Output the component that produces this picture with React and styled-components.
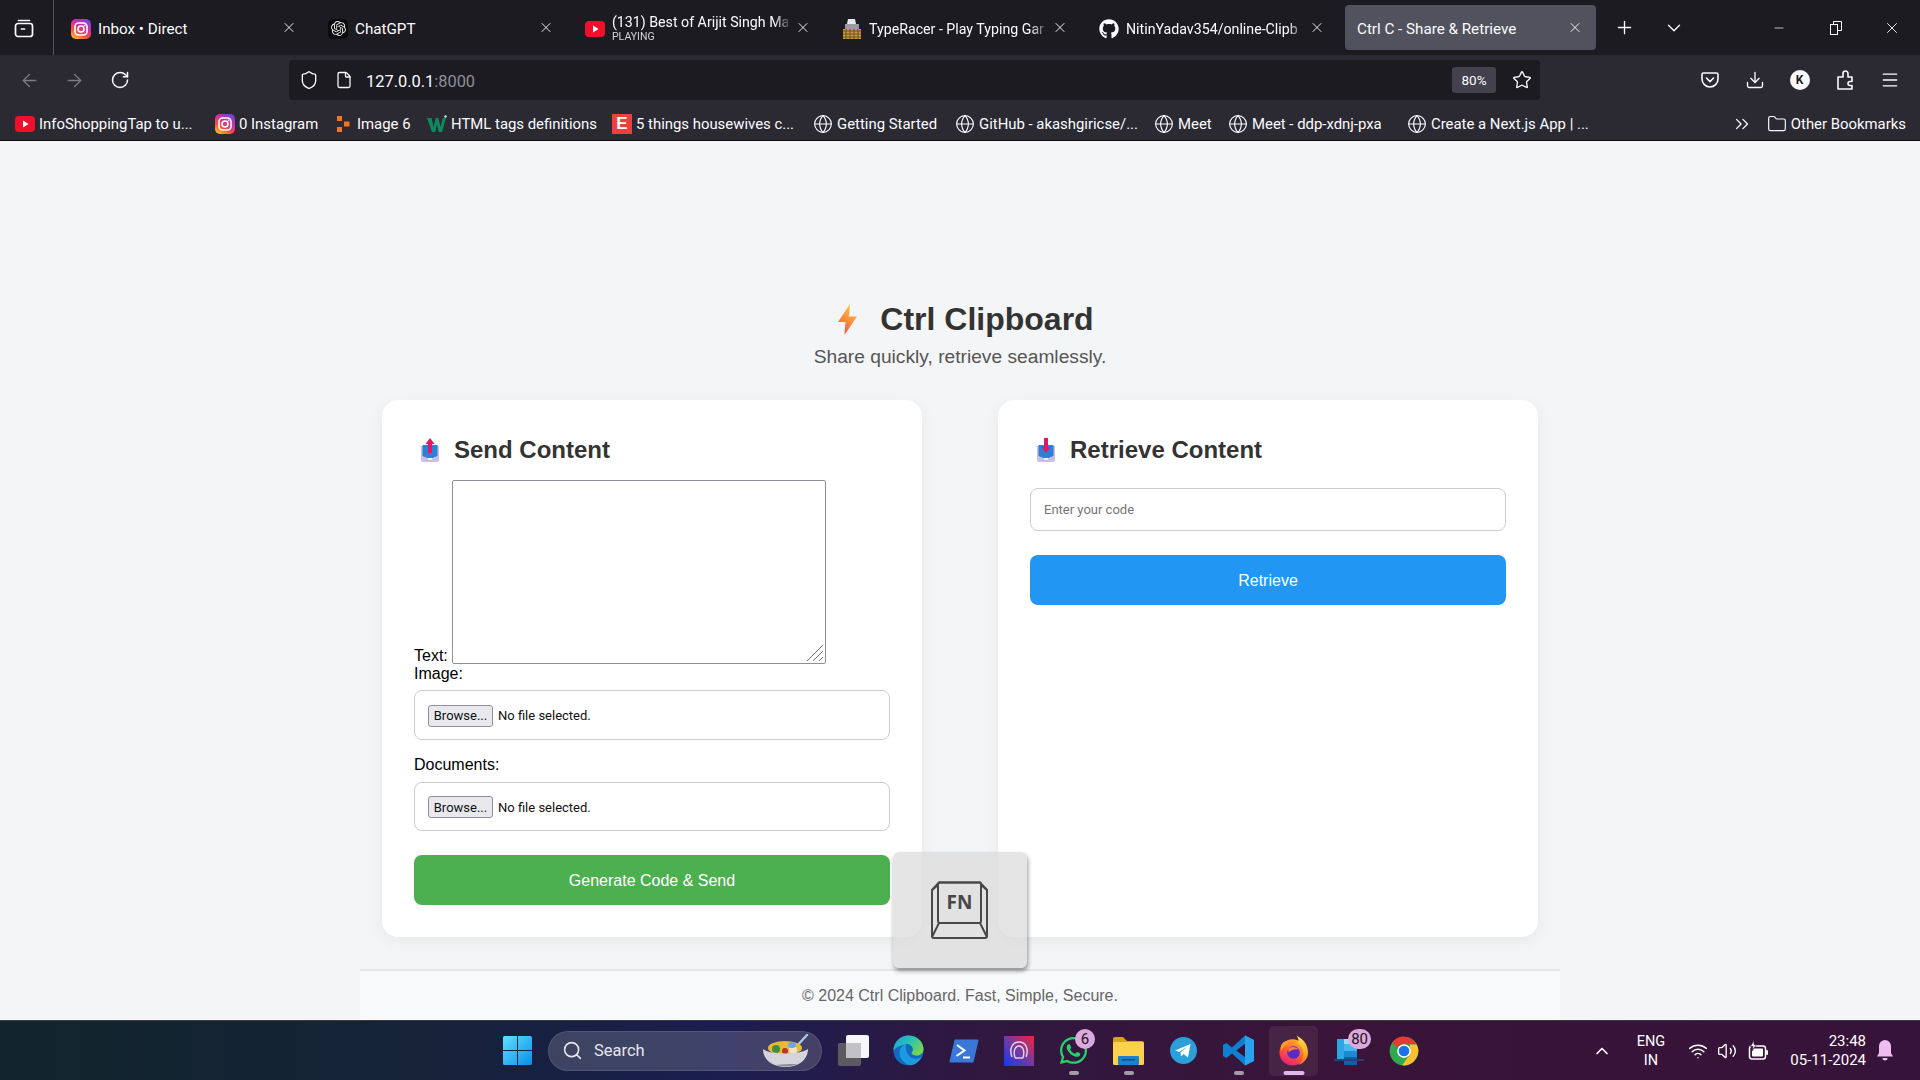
import React from 'react'
import styled, { createGlobalStyle } from 'styled-components'
import {
  ArrowLeft, ArrowRight, RotateCw, Plus, ChevronDown, Minus, X, Shield, File, Star,
  Download, Menu, Globe, ChevronsRight, Folder, Search, ChevronUp, Wifi, Volume2,
} from 'lucide-react'
import { SiOpenai } from 'react-icons/si'
import { FaGithub, FaWhatsapp } from 'react-icons/fa'

const GlobalStyle = createGlobalStyle`
  html, body { margin: 0; padding: 0; height: 100%; overflow: hidden; }
  body { background: #f4f5f7; font-family: "Liberation Sans", Arial, sans-serif; }
  * { box-sizing: border-box; }
`

const Screen = styled.div`
  width: 1920px;
  height: 1080px;
  display: flex;
  flex-direction: column;
  overflow: hidden;
`

/* browser chrome */
const TabStrip = styled.div`
  height: 55px;
  flex: none;
  display: flex;
  align-items: stretch;
  background: #1c1b22;
  color: #fbfbfe;
  font-family: Roboto, sans-serif;
  font-size: 15.2px;
`
const TabsButton = styled.div`
  width: 54px;
  margin-right: 4px;
  padding-right: 5px;
  display: flex;
  align-items: center;
  justify-content: center;
  border-right: 1px solid #55545c;
`
const Tab = styled.div`
  width: ${({ $active }) => ($active ? '251px' : '257px')};
  margin: ${({ $active }) => ($active ? '5px 0 5px 2px' : '0')};
  padding: 2px 0 0 ${({ $active }) => ($active ? '12px' : '13px')};
  display: flex;
  align-items: center;
  gap: 7px;
  border-radius: 4px;
  background: ${({ $active }) => ($active ? '#52525e' : 'transparent')};
`
const TabTitle = styled.div`
  flex: 1;
  min-width: 0;
  white-space: nowrap;
  overflow: hidden;
  font-size: ${({ $fade }) => ($fade ? '14.2px' : 'inherit')};
  mask-image: ${({ $fade }) => ($fade ? 'linear-gradient(to right, #000 92%, rgba(0, 0, 0, 0.25))' : 'none')};
`
const TabSub = styled.div`
  margin-top: 1px;
  font-size: 10.5px;
  line-height: 12px;
  color: #d4d4d8;
`
const TabClose = styled.div`
  width: 16px;
  flex: none;
  margin-right: ${({ $active }) => ($active ? '13px' : '18px')};
  margin-bottom: 2px;
  display: flex;
  justify-content: center;
`
const StripButton = styled.div`
  width: ${({ $w }) => $w}px;
  display: flex;
  align-items: center;
  justify-content: center;
`
const WindowButtons = styled.div`
  margin-left: auto;
  display: flex;
`
const Toolbar = styled.div`
  height: 50px;
  flex: none;
  padding-left: 7px;
  display: flex;
  align-items: center;
  background: #2b2a33;
  color: #fbfbfe;
`
const NavButton = styled.div`
  width: 45px;
  display: flex;
  justify-content: center;
  color: ${({ $dim }) => ($dim ? '#7c7b82' : '#fbfbfe')};
`
const UrlBar = styled.div`
  width: 1251px;
  height: 40px;
  margin-left: 147px;
  margin-right: 147px;
  padding: 0 4px 0 10px;
  display: flex;
  align-items: center;
  border-radius: 4px;
  background: #1c1b22;
`
const UrlIcon = styled.div`
  width: ${({ $w }) => $w}px;
  margin-right: ${({ $mr }) => $mr}px;
  display: flex;
  justify-content: center;
`
const UrlText = styled.div`
  margin-left: -1px;
  padding-top: 2px;
  font-family: Roboto, sans-serif;
  font-size: 16.4px;
  color: #fbfbfe;
  span { color: #8f8f96; }
`
const ZoomChip = styled.div`
  width: 44px;
  height: 26px;
  margin-left: auto;
  margin-right: 12px;
  display: flex;
  align-items: center;
  justify-content: center;
  border-radius: 3px;
  background: #42414d;
  font-family: Roboto, sans-serif;
  font-size: 13.5px;
`
const Avatar = styled.div`
  width: 20px;
  height: 20px;
  display: flex;
  align-items: center;
  justify-content: center;
  border-radius: 50%;
  background: #fbfbfe;
  color: #1c1b22;
  font: bold 12px Roboto, sans-serif;
`
const BookmarkBar = styled.div`
  height: 36px;
  flex: none;
  padding: 2px 14px 0 15px;
  display: flex;
  align-items: center;
  background: #2b2a33;
  border-bottom: 1px solid #0c0c0d;
  color: #fbfbfe;
  font-family: Roboto, sans-serif;
  font-size: 14.9px;
`
const Bookmark = styled.div`
  width: ${({ $w }) => ($w ? `${$w}px` : 'auto')};
  flex: none;
  display: flex;
  align-items: center;
  gap: 4px;
  white-space: nowrap;
`
const BookmarkIcon = styled.div`
  width: 20px;
  height: 20px;
  flex: none;
  display: flex;
  align-items: center;
  justify-content: center;
`
const BookmarkEnd = styled.div`
  margin-left: auto;
  display: flex;
  align-items: center;
  gap: 14px;
`

/* page */
const Page = styled.main`
  flex: 1;
  min-height: 0;
  position: relative;
  background: #f4f5f7;
`
const Column = styled.div`
  width: 1200px;
  height: 100%;
  margin: 0 auto;
  display: flex;
  flex-direction: column;
`
const Hero = styled.header`
  padding: 160px 0 32px;
  text-align: center;
`
const Title = styled.h1`
  margin: 0;
  padding-left: 12px;
  display: flex;
  align-items: center;
  justify-content: center;
  gap: 23px;
  font-size: 32px;
  line-height: 36px;
  font-weight: bold;
  color: #333;
`
const Tagline = styled.p`
  margin: 9px 0 0;
  font-size: 19.2px;
  line-height: 22px;
  color: #555;
`
const Cards = styled.div`
  padding: 0 22px;
  display: flex;
  justify-content: space-between;
`
const Card = styled.section`
  width: 540px;
  height: 537px;
  padding: 36px 32px 32px;
  border-radius: 16px;
  background: #fff;
  box-shadow: 0 4px 16px rgba(0, 0, 0, 0.06);
`
const CardHeading = styled.h2`
  margin: 0 0 ${({ $gap }) => $gap}px;
  padding-left: 6px;
  display: flex;
  align-items: center;
  gap: 14px;
  font-size: 24px;
  line-height: 27px;
  color: #333;
`
const TextRow = styled.div`
  display: flex;
  align-items: flex-end;
  gap: 4px;
`
const FieldLabel = styled.label`
  display: block;
  margin-top: ${({ $top }) => $top || 0}px;
  margin-bottom: ${({ $bottom }) => $bottom || 0}px;
  font-size: 16px;
  line-height: 18px;
  color: #000;
`
const TextAreaWrap = styled.div`
  position: relative;
  width: 374px;
  height: 184px;
`
const TextBox = styled.textarea`
  display: block;
  width: 100%;
  height: 100%;
  border: 1.5px solid #8f8f9d;
  border-radius: 2px;
  background: #fff;
  resize: none;
  outline: none;
`
const ResizeHandle = styled.svg`
  position: absolute;
  right: 2px;
  bottom: 2px;
`
const FileBox = styled.div`
  height: ${({ $h }) => $h}px;
  margin-bottom: 16px;
  padding: 1px 0 0 13px;
  display: flex;
  align-items: center;
  gap: 5px;
  border: 1px solid #ccc;
  border-radius: 8px;
  font-family: Roboto, sans-serif;
  font-size: 13px;
  color: #111;
`
const BrowseButton = styled.button`
  width: 65px;
  height: 22px;
  padding: 0;
  border: 1px solid #8f8f9d;
  border-radius: 3px;
  background: #e9e9ed;
  font: 13px Roboto, sans-serif;
  color: #111;
`
const ActionButton = styled.button`
  display: block;
  width: 100%;
  height: 50px;
  margin-top: ${({ $top }) => $top}px;
  padding: 2px 0 0;
  border: 0;
  border-radius: 8px;
  background: ${({ $color }) => $color};
  color: #fff;
  font: 16px "Liberation Sans", Arial, sans-serif;
`
const CodeInput = styled.input`
  display: block;
  width: 100%;
  height: 43px;
  padding: 0 13px;
  border: 1px solid #ccc;
  border-radius: 8px;
  background: #fff;
  outline: none;
  font: 13px Roboto, sans-serif;
  &::placeholder { color: #757575; opacity: 1; }
`
const Footer = styled.footer`
  flex: 1;
  margin-top: 32px;
  padding-top: 14px;
  border-top: 2px solid #e3e4e6;
  background: #f8f9fb;
  text-align: center;
  font-size: 16px;
  line-height: 22px;
  color: #666;
`
const FnOverlay = styled.div`
  position: absolute;
  left: 893px;
  top: 711px;
  width: 134px;
  height: 116px;
  padding-right: 2px;
  display: flex;
  align-items: center;
  justify-content: center;
  border-radius: 6px;
  background: rgba(218, 218, 218, 0.7);
  box-shadow: 1px 3px 4px rgba(0, 0, 0, 0.4);
`

/* windows taskbar */
const Taskbar = styled.div`
  height: 60px;
  flex: none;
  padding-left: 490px;
  display: flex;
  align-items: center;
  border-top: 1px solid #3b3a40;
  background: linear-gradient(90deg, #12252c 0%, #152238 22%, #1b1e50 38%, #2f1840 50%, #3a1439 68%, #36133a 100%);
  color: #fff;
  font-family: Roboto, sans-serif;
`
const TaskSlot = styled.div`
  position: relative;
  width: 55px;
  height: 50px;
  flex: none;
  display: flex;
  align-items: center;
  justify-content: center;
  &::before {
    content: '';
    position: absolute;
    inset: 0 3px;
    border-radius: 5px;
    background: ${({ $active }) => ($active ? 'rgba(255, 255, 255, 0.07)' : 'transparent')};
  }
  > svg { position: relative; }
`
const RunDot = styled.div`
  position: absolute;
  left: 50%;
  bottom: 1px;
  width: ${({ $active }) => ($active ? '21px' : '10px')};
  height: 4px;
  transform: translateX(-50%);
  border-radius: 2px;
  background: ${({ $active }) => ($active ? '#e4b5e8' : '#a39ca6')};
`
const Badge = styled.div`
  position: absolute;
  top: 3px;
  right: ${({ $wide }) => ($wide ? '5px' : '6px')};
  min-width: 20px;
  height: 20px;
  padding: 0 3px;
  display: flex;
  align-items: center;
  justify-content: center;
  border-radius: 10px;
  background: #dba9de;
  color: #1d1020;
  font-size: 15px;
`
const SearchBox = styled.div`
  width: 274px;
  height: 40px;
  margin: 0 4px 0 3px;
  padding: 0 11px 0 13px;
  flex: none;
  display: flex;
  align-items: center;
  gap: 11px;
  border-radius: 20px;
  border: 1px solid rgba(255, 255, 255, 0.1);
  background: rgba(255, 255, 255, 0.16);
  color: #e6e6ea;
  font-size: 16.5px;
  svg:last-child { margin-left: auto; }
`
const Tray = styled.div`
  margin-left: auto;
  padding-right: 24px;
  display: flex;
  align-items: center;
`
const TraySlot = styled.div`
  width: ${({ $w }) => $w}px;
  display: flex;
  justify-content: center;
`
const LangText = styled.div`
  text-align: center;
  font-size: 14.5px;
  line-height: 19px;
`
const Clock = styled.div`
  width: 91px;
  margin-right: 8px;
  text-align: right;
  font-size: 15px;
  line-height: 19px;
`

/* drawn icons */
const InstagramIcon = ({ id }) => (
  <svg width="20" height="20" viewBox="0 0 20 20">
    <defs>
      <linearGradient id={id} x1="0.1" y1="1" x2="0.7" y2="0">
        <stop offset="0" stopColor="#fdc830" />
        <stop offset="0.35" stopColor="#f5533d" />
        <stop offset="0.65" stopColor="#d62f9b" />
        <stop offset="1" stopColor="#7b3fe4" />
      </linearGradient>
    </defs>
    <rect width="20" height="20" rx="5" fill={`url(#${id})`} />
    <rect x="4" y="4" width="12" height="12" rx="3.5" fill="none" stroke="#fff" strokeWidth="1.6" />
    <circle cx="10" cy="10" r="3" fill="none" stroke="#fff" strokeWidth="1.6" />
    <circle cx="13.6" cy="6.4" r="0.9" fill="#fff" />
  </svg>
)
const YoutubeIcon = () => (
  <svg width="20" height="16" viewBox="0 0 20 16">
    <rect width="20" height="16" rx="4" fill="#f0102c" />
    <path d="M8 4.5 L13.5 8 L8 11.5 Z" fill="#fff" />
  </svg>
)
const FaviconBlack = styled.div`
  width: 20px;
  height: 20px;
  flex: none;
  display: flex;
  align-items: center;
  justify-content: center;
  border-radius: 5px;
  background: #0b0b0d;
`
const ChatGptIcon = () => (
  <FaviconBlack><SiOpenai size={15} color="#e8e8e8" /></FaviconBlack>
)
const TypeRacerIcon = () => (
  <svg width="20" height="20" viewBox="0 0 20 20">
    <path d="M6 0h7l1 5H5z" fill="#e8e8ea" />
    <rect x="3" y="5" width="14" height="5" fill="#9a9aa0" />
    <rect x="1" y="10" width="18" height="10" fill="#c79a3c" />
    <path d="M1 12h18M1 15h18M1 18h18M4 10v10M8 10v10M12 10v10M16 10v10" stroke="#6e5220" strokeWidth="1" />
  </svg>
)
const ImageSixIcon = () => (
  <svg width="14" height="20" viewBox="0 0 14 20">
    <path d="M1 2h5v5H1zM8 7.5h5.5v5H8zM1 13h5v5H1z" fill="#f47521" />
  </svg>
)
const WIcon = () => (
  <svg width="20" height="18" viewBox="0 0 20 18">
    <path d="M0 3h4.5l2 9 2.4-9h2.4l2.4 9 2-9H19l-4 14h-3.2L10 9.5 8.2 17H5z" fill="#0c8a5f" />
    <circle cx="18.5" cy="1.5" r="1.2" fill="#cfe8dd" />
  </svg>
)
const EBadge = styled.div`
  width: 20px;
  height: 20px;
  display: flex;
  align-items: center;
  justify-content: center;
  background: #ee3f3f;
  color: #fff;
  font: bold 17px "Liberation Sans", sans-serif;
`
const PocketIcon = () => (
  <svg width="20" height="20" viewBox="0 0 20 20" fill="none" stroke="#fbfbfe" strokeWidth="1.6">
    <path d="M3.5 3h13A1.5 1.5 0 0 1 18 4.5V9a8 8 0 0 1-16 0V4.5A1.5 1.5 0 0 1 3.5 3z" />
    <path d="M6.5 8 L10 11.5 L13.5 8" strokeLinecap="round" />
  </svg>
)
const ExtensionIcon = () => (
  <svg width="20" height="20" viewBox="0 0 20 20" fill="none" stroke="#fbfbfe" strokeWidth="1.6" strokeLinejoin="round">
    <path d="M3 7h5V3.500a2.500 2.500 0 0 1 5 0V7h4v4.500h-2a2 2 0 0 0 0 4h2V19H3z" />
  </svg>
)
const RestoreIcon = () => (
  <svg width="12" height="14" viewBox="0 0 12 14" fill="none" stroke="#fbfbfe" strokeWidth="1">
    <rect x="0.5" y="3.5" width="7" height="10" />
    <path d="M3.5 3.5v-3h8v9h-4" />
  </svg>
)
const TabsIcon = () => (
  <svg width="20" height="20" viewBox="0 0 20 20" fill="none" stroke="#fbfbfe" strokeWidth="1.7">
    <path d="M4.5 2.5h11" strokeLinecap="round" />
    <rect x="1.5" y="5.5" width="17" height="13" rx="2.5" />
    <path d="M7.5 11h3" strokeLinecap="round" />
  </svg>
)
const BoltIcon = () => (
  <svg width="19" height="31" viewBox="0 0 19 31">
    <defs>
      <linearGradient id="bolt" x1="0.7" y1="0" x2="0.3" y2="1">
        <stop offset="0" stopColor="#ffc64d" />
        <stop offset="0.55" stopColor="#ff8a3c" />
        <stop offset="1" stopColor="#ee4f45" />
      </linearGradient>
    </defs>
    <path d="M12 0 L0 18 L7.5 18 L6.5 31 L19 12.5 L11 12.5 Z" fill="url(#bolt)" />
  </svg>
)
const TrayIcon = ({ up }) => (
  <svg width="20" height="24" viewBox="0 0 20 24">
    <path d="M1 8h18v14a2 2 0 0 1-2 2H3a2 2 0 0 1-2-2z" fill="#cdbfe4" />
    <path d="M2.5 7h15v11l-5 2H7.5l-5-2z" fill="#2f7fd6" />
    <rect x="8" y="20" width="4" height="1.5" fill="#fff" />
    {up
      ? <path d="M10 0 L14.5 6 H12 V15 H8 V6 H5.5 Z" fill="#e01a62" />
      : <path d="M8 0 H12 V9 H14.5 L10 15 L5.5 9 H8 Z" fill="#e01a62" />}
  </svg>
)
const FnKeyIcon = () => (
  <svg width="57" height="58" viewBox="0 0 57 58" fill="none" stroke="#484848" strokeWidth="2" strokeLinejoin="round">
    <path d="M8 1.5h41l7 7.5v46a2 2 0 0 1-2 2H3a2 2 0 0 1-2-2V9z" />
    <path d="M8 1.5h41a1.5 1.5 0 0 1 1 1.5v37a2 2 0 0 1-2 2H9a2 2 0 0 1-2-2V3z" />
    <path d="M1 9 L7 4 M56 9 L50 4 M8 42 L1 56 M49 42 L56 56" />
    <text x="28.5" y="28" textAnchor="middle" fill="#484848" stroke="none" fontFamily="'Open Sans', sans-serif" fontWeight="700" fontSize="19">FN</text>
  </svg>
)
const WindowsLogo = () => (
  <svg width="29" height="29" viewBox="0 0 29 29">
    <defs>
      <linearGradient id="win" x1="0" y1="0" x2="1" y2="1">
        <stop offset="0" stopColor="#5fe0ff" />
        <stop offset="1" stopColor="#0a8ee8" />
      </linearGradient>
    </defs>
    <path d="M1.5 0H14v14H0V1.5A1.5 1.5 0 0 1 1.5 0zM15 0h12.5A1.5 1.5 0 0 1 29 1.5V14H15zM0 15h14v14H1.5A1.5 1.5 0 0 1 0 27.5zM15 15h14v12.5a1.5 1.5 0 0 1-1.5 1.5H15z" fill="url(#win)" />
  </svg>
)
const BowlIcon = () => (
  <svg width="48" height="34" viewBox="0 0 48 34">
    <path d="M32 15 L45 1" stroke="#a8c6ea" strokeWidth="2.5" strokeLinecap="round" />
    <ellipse cx="23" cy="14" rx="17" ry="7" fill="#e7b93a" />
    <circle cx="14" cy="15" r="4" fill="#3f8f3f" />
    <circle cx="23" cy="17" r="3" fill="#b8352a" />
    <circle cx="31" cy="16" r="4" fill="#f0e0d0" />
    <ellipse cx="30" cy="11" rx="4" ry="3" fill="#6fa4dc" />
    <path d="M1 15 C8 21 38 21 46 15 C46 26 36 33 24 33 C11 33 1 26 1 15 Z" fill="#d5d3dc" />
    <path d="M14 31 C20 33 30 33 35 30 C30 30 20 30 14 31 Z" fill="#8f8c9c" />
  </svg>
)
const TaskViewIcon = () => (
  <svg width="31" height="31" viewBox="0 0 31 31">
    <rect x="0" y="8" width="23" height="23" rx="2" fill="#5c5a60" />
    <rect x="8" y="0" width="23" height="23" rx="2" fill="#f6f6f8" />
    <rect x="8" y="8" width="15" height="15" fill="#c2c1c5" />
  </svg>
)
const EdgeIcon = () => (
  <svg width="31" height="31" viewBox="0 0 32 32">
    <defs>
      <linearGradient id="edgeA" x1="0" y1="0" x2="1" y2="0.6">
        <stop offset="0" stopColor="#1a9be0" />
        <stop offset="0.55" stopColor="#2cc5b0" />
        <stop offset="1" stopColor="#7bd24f" />
      </linearGradient>
    </defs>
    <circle cx="16" cy="16" r="15.5" fill="#1269c0" />
    <path d="M.5 16C.5 7.4 7.4.5 16 .5c8.4 0 15.5 6 15.5 14 0 4.3-3.4 6.8-7 6.8-3 0-5.3-1-5.3-2.6 0-.7.4-1 .9-1.8.6-1 .7-2.4 0-3.8C19 10.300 16 9 13.300 9.500 7 10.500 2 13.500.5 16z" fill="url(#edgeA)" />
    <path d="M13.300 9.500C8 11 5.500 17 7.500 22.500c1.500 4.300 6 8 11 8.800 5-1 9-4.300 11-8.800-2 1.700-5 2.500-8 1.800-5.500-1.300-9-7-8.200-14.800z" fill="#1e9be0" />
  </svg>
)
const PowerShellIcon = () => (
  <svg width="30" height="24" viewBox="0 0 30 24">
    <path d="M6 0.500 H28.500 A1 1 0 0 1 29.500 1.500 L24.500 23 A1 1 0 0 1 23.500 23.500 H1 A1 1 0 0 1 0.500 22.500 L5.500 1 Z" fill="#3a78d8" />
    <path d="M8 6 L15.500 11.500 L7.500 17" stroke="#fff" strokeWidth="2" fill="none" />
    <path d="M14 18.500 H21" stroke="#fff" strokeWidth="2" />
  </svg>
)
const ArchAppIcon = () => (
  <svg width="30" height="30" viewBox="0 0 30 30">
    <defs>
      <linearGradient id="arch" x1="0" y1="1" x2="1" y2="0">
        <stop offset="0" stopColor="#1438f0" />
        <stop offset="0.55" stopColor="#7b3a98" />
        <stop offset="1" stopColor="#f81f3a" />
      </linearGradient>
    </defs>
    <rect width="30" height="30" fill="url(#arch)" />
    <g fill="none" stroke="#e8cfe0" strokeWidth="1.500">
      <path d="M8 21 C5 13 8 6 15 6 C22 6 25 13 22 21" />
      <path d="M11 22 C9 15 11 10 15 10 C19 10 21 15 19 22" />
      <path d="M11 22 H19" />
    </g>
  </svg>
)
const FolderIcon = () => (
  <svg width="31" height="28" viewBox="0 0 31 28">
    <path d="M0 2a2 2 0 0 1 2-2h8l4 4h15a2 2 0 0 1 2 2v4H0z" fill="#d9a21b" />
    <rect y="5" width="31" height="23" rx="1.500" fill="#fbd24b" />
    <rect x="5" y="19" width="21" height="9" rx="1" fill="#1a82cf" />
    <rect x="9" y="22" width="13" height="1.500" fill="#0b4f8a" />
  </svg>
)
const TelegramIcon = () => (
  <svg width="27" height="27" viewBox="0 0 27 27">
    <circle cx="13.500" cy="13.500" r="13.500" fill="#2a9fd8" />
    <path d="M5 13.500 L20.500 7 L18 20.500 L13.500 17 L11 19.500 L10.500 15.500 L17 10 L9 15 Z" fill="#fff" />
  </svg>
)
const CodeIcon = () => (
  <svg width="31" height="31" viewBox="0 0 31 31">
    <path d="M22 0.500 L31 5 V26 L22 30.500 L9 18.500 L3.500 23 L0 21 V10 L3.500 8 L9 12.500 Z M22 9 L13.500 15.500 L22 22 Z" fill="#0f7fd0" />
    <path d="M22 0.500 L31 5 V26 L22 30.500 Z M22 9 V22" fill="#2aa3ee" />
    <path d="M22 9 L13.500 15.500 L22 22 Z" fill="#36133a" />
  </svg>
)
const FirefoxIcon = () => (
  <svg width="31" height="31" viewBox="0 0 32 32">
    <defs>
      <linearGradient id="ffA" x1="0.8" y1="0" x2="0.3" y2="1">
        <stop offset="0" stopColor="#ffb52e" />
        <stop offset="0.55" stopColor="#ff5a36" />
        <stop offset="1" stopColor="#e61b78" />
      </linearGradient>
      <linearGradient id="ffB" x1="0.5" y1="0" x2="0.5" y2="1">
        <stop offset="0" stopColor="#ffe04a" />
        <stop offset="0.7" stopColor="#ffa01f" />
        <stop offset="1" stopColor="#ff5a36" />
      </linearGradient>
    </defs>
    <circle cx="15" cy="18" r="13.500" fill="url(#ffA)" />
    <path d="M19 0.500 C26 4 31 10 31 18 C31 24 27 29 21 31 C26 26 27.500 20 25.500 15 C24 11 21.500 9.500 20 9 C22 6 21 3 19 0.500 Z" fill="url(#ffB)" />
    <path d="M3 11 C5 7 8 6 11 6 C9.500 8 10 9.500 12 10 C8 10 5 12 3 17 Z" fill="#ff9a2b" />
    <circle cx="16" cy="18" r="6.500" fill="#5a2bc7" />
    <path d="M10.500 14 C14 11.500 19 12 22 15 C19 14 14 15 11 18 Z" fill="#ff7a35" />
  </svg>
)
const StoreIcon = () => (
  <svg width="30" height="30" viewBox="0 0 30 30">
    <rect x="3" y="3" width="10" height="22" fill="#2ba7e6" />
    <rect x="10" y="3" width="13" height="5" fill="#9fdcf5" />
    <rect x="10" y="8" width="13" height="7" fill="#46b8ec" />
    <rect x="10" y="15" width="13" height="6" fill="#1b8ad2" />
    <rect x="10" y="21" width="13" height="8" fill="#0d5fa8" />
    <rect x="0" y="23" width="30" height="2" fill="#2f3c78" />
  </svg>
)
const ChromeIcon = () => (
  <svg width="30" height="30" viewBox="0 0 48 48">
    <circle cx="24" cy="24" r="23" fill="#2fa84f" />
    <path d="M44 13 A23 23 0 0 1 21 46.800 L33.500 29.500 V13 Z" fill="#fbc02d" />
    <path d="M24 1 A23 23 0 0 1 44 13 H24 A11 11 0 0 0 14 19.500 L5.300 10.500 A23 23 0 0 1 24 1 Z" fill="#e53935" />
    <circle cx="24" cy="24" r="11" fill="#fff" />
    <circle cx="24" cy="24" r="8.500" fill="#1a73e8" />
  </svg>
)
const BatteryIcon = () => (
  <svg width="21" height="21" viewBox="0 0 21 21">
    <rect x="1.500" y="6" width="16" height="13" rx="2.500" fill="none" stroke="#fff" strokeWidth="1.500" />
    <rect x="4" y="8.500" width="11" height="8" rx="1" fill="#fff" />
    <rect x="18" y="10" width="2" height="5" rx="1" fill="#fff" />
    <path d="M6 0 L2.500 6.500 H5 L4 11 L8.500 4.500 H6 Z" fill="#fff" stroke="#36133a" strokeWidth="0.800" />
  </svg>
)
const BellIcon = () => (
  <svg width="16" height="22" viewBox="0 0 16 22">
    <path d="M8 0 A6 6 0 0 1 14 6 V13 L16 16.500 H0 L2 13 V6 A6 6 0 0 1 8 0 Z" fill="#eebcf0" />
    <path d="M5.500 18 H10.500 A2.500 2.500 0 0 1 5.500 18 Z" fill="#eebcf0" />
  </svg>
)

const globe = <Globe size={20} strokeWidth={1.4} />

const bookmarks = [
  { w: 200, icon: <YoutubeIcon />, label: 'InfoShoppingTap to u...' },
  { w: 118, icon: <InstagramIcon id="igBook" />, label: '0 Instagram' },
  { w: 94, icon: <ImageSixIcon />, label: 'Image 6' },
  { w: 185, icon: <WIcon />, label: 'HTML tags definitions' },
  { w: 201, icon: <EBadge>E</EBadge>, label: '5 things housewives c...' },
  { w: 142, icon: globe, label: 'Getting Started' },
  { w: 199, icon: globe, label: 'GitHub - akashgiricse/...' },
  { w: 74, icon: globe, label: 'Meet' },
  { w: 179, icon: globe, label: 'Meet - ddp-xdnj-pxa' },
  { icon: globe, label: 'Create a Next.js App | ...' },
]

const tabs = [
  { icon: <InstagramIcon id="igTab" />, title: 'Inbox • Direct' },
  { icon: <ChatGptIcon />, title: 'ChatGPT' },
  { icon: <YoutubeIcon />, title: '(131) Best of Arijit Singh Ma', sub: 'PLAYING', fade: true },
  { icon: <TypeRacerIcon />, title: 'TypeRacer - Play Typing Gar', fade: true },
  { icon: <FaGithub size={20} color="#fbfbfe" />, title: 'NitinYadav354/online-Clipb', fade: true },
]

const closeIcon = <X size={17} strokeWidth={1.4} />

const dock = [
  { icon: <TaskViewIcon /> },
  { icon: <EdgeIcon /> },
  { icon: <PowerShellIcon /> },
  { icon: <ArchAppIcon /> },
  { icon: <FaWhatsapp size={31} color="#25d366" />, badge: '6', dot: true },
  { icon: <FolderIcon />, dot: true },
  { icon: <TelegramIcon /> },
  { icon: <CodeIcon />, dot: true },
  { icon: <FirefoxIcon />, active: true, dot: true },
  { icon: <StoreIcon />, badge: '80' },
  { icon: <ChromeIcon /> },
]

const FilePicker = ({ height }) => (
  <FileBox $h={height}>
    <BrowseButton type="button">Browse...</BrowseButton>
    No file selected.
  </FileBox>
)

export default function App() {
  return (
    <Screen>
      <GlobalStyle />
      <TabStrip>
        <TabsButton><TabsIcon /></TabsButton>
        {tabs.map((tab) => (
          <Tab key={tab.title}>
            {tab.icon}
            <TabTitle $fade={tab.fade}>
              {tab.title}
              {tab.sub && <TabSub>{tab.sub}</TabSub>}
            </TabTitle>
            <TabClose>{closeIcon}</TabClose>
          </Tab>
        ))}
        <Tab $active>
          <TabTitle>Ctrl C - Share &amp; Retrieve</TabTitle>
          <TabClose $active>{closeIcon}</TabClose>
        </Tab>
        <StripButton $w={56}><Plus size={21} strokeWidth={1.5} /></StripButton>
        <StripButton $w={44}><ChevronDown size={22} strokeWidth={1.5} /></StripButton>
        <WindowButtons>
          <StripButton $w={57}><Minus size={14} strokeWidth={1.2} /></StripButton>
          <StripButton $w={57}><RestoreIcon /></StripButton>
          <StripButton $w={56}><X size={18} strokeWidth={1.2} /></StripButton>
        </WindowButtons>
      </TabStrip>

      <Toolbar>
        <NavButton $dim><ArrowLeft size={21} strokeWidth={1.6} /></NavButton>
        <NavButton $dim><ArrowRight size={21} strokeWidth={1.6} /></NavButton>
        <NavButton><RotateCw size={20} strokeWidth={1.8} /></NavButton>
        <UrlBar>
          <UrlIcon $w={20} $mr={16}><Shield size={20} strokeWidth={1.6} /></UrlIcon>
          <UrlIcon $w={18} $mr={14}><File size={18} strokeWidth={1.7} /></UrlIcon>
          <UrlText>127.0.0.1<span>:8000</span></UrlText>
          <ZoomChip>80%</ZoomChip>
          <UrlIcon $w={28} $mr={0}><Star size={20} strokeWidth={1.6} /></UrlIcon>
        </UrlBar>
        <NavButton><PocketIcon /></NavButton>
        <NavButton><Download size={20} strokeWidth={1.6} /></NavButton>
        <NavButton><Avatar>K</Avatar></NavButton>
        <NavButton><ExtensionIcon /></NavButton>
        <NavButton><Menu size={20} strokeWidth={1.6} /></NavButton>
      </Toolbar>

      <BookmarkBar>
        {bookmarks.map((item) => (
          <Bookmark key={item.label} $w={item.w}>
            <BookmarkIcon>{item.icon}</BookmarkIcon>
            {item.label}
          </Bookmark>
        ))}
        <BookmarkEnd>
          <ChevronsRight size={22} strokeWidth={1.4} />
          <Bookmark>
            <BookmarkIcon><Folder size={20} strokeWidth={1.4} /></BookmarkIcon>
            Other Bookmarks
          </Bookmark>
        </BookmarkEnd>
      </BookmarkBar>

      <Page>
        <Column>
          <Hero>
            <Title><BoltIcon />Ctrl Clipboard</Title>
            <Tagline>Share quickly, retrieve seamlessly.</Tagline>
          </Hero>
          <Cards>
            <Card>
              <CardHeading $gap={17}><TrayIcon up />Send Content</CardHeading>
              <TextRow>
                <FieldLabel $bottom={-1}>Text:</FieldLabel>
                <TextAreaWrap>
                  <TextBox />
                  <ResizeHandle width="18" height="18" viewBox="0 0 18 18" stroke="#77767f" strokeWidth="1">
                    <path d="M1 17 L17 1 M7 17 L17 7 M13 17 L17 13" />
                  </ResizeHandle>
                </TextAreaWrap>
              </TextRow>
              <FieldLabel $top={1} $bottom={7}>Image:</FieldLabel>
              <FilePicker height={50} />
              <FieldLabel $top={1} $bottom={8}>Documents:</FieldLabel>
              <FilePicker height={49} />
              <ActionButton type="button" $top={24} $color="#4caf50">Generate Code &amp; Send</ActionButton>
            </Card>
            <Card>
              <CardHeading $gap={25}><TrayIcon />Retrieve Content</CardHeading>
              <CodeInput placeholder="Enter your code" />
              <ActionButton type="button" $top={24} $color="#2196f3">Retrieve</ActionButton>
            </Card>
          </Cards>
          <Footer>© 2024 Ctrl Clipboard. Fast, Simple, Secure.</Footer>
        </Column>
        <FnOverlay><FnKeyIcon /></FnOverlay>
      </Page>

      <Taskbar>
        <TaskSlot><WindowsLogo /></TaskSlot>
        <SearchBox>
          <Search size={21} strokeWidth={1.8} />
          Search
          <BowlIcon />
        </SearchBox>
        {dock.map((item, i) => (
          <TaskSlot key={i} $active={item.active}>
            {item.icon}
            {item.badge && <Badge $wide={item.badge.length > 1}>{item.badge}</Badge>}
            {item.dot && <RunDot $active={item.active} />}
          </TaskSlot>
        ))}
        <Tray>
          <TraySlot $w={34}><ChevronUp size={20} strokeWidth={2} /></TraySlot>
          <TraySlot $w={64}><LangText>ENG<br />IN</LangText></TraySlot>
          <TraySlot $w={30}><Wifi size={20} strokeWidth={1.8} /></TraySlot>
          <TraySlot $w={28}><Volume2 size={20} strokeWidth={1.6} /></TraySlot>
          <TraySlot $w={34}><BatteryIcon /></TraySlot>
          <Clock>23:48<br />05-11-2024</Clock>
          <TraySlot $w={22}><BellIcon /></TraySlot>
        </Tray>
      </Taskbar>
    </Screen>
  )
}
